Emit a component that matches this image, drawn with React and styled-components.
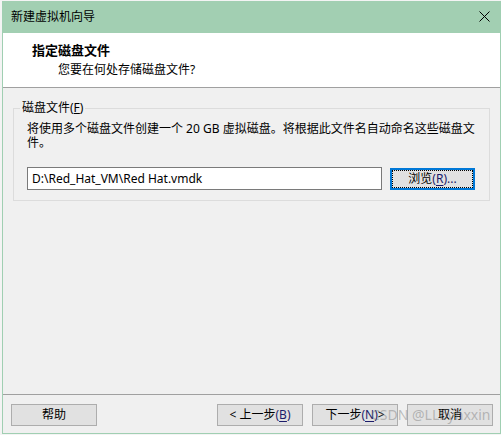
import React from "react";
import styled, { createGlobalStyle } from "styled-components";

const GlobalStyle = createGlobalStyle`
  html, body {
    margin: 0;
    padding: 0;
    background: #f4f4f4;
  }
  body {
    font-family: "Noto Sans", "Noto Sans CJK SC", sans-serif;
    font-size: 12px;
    color: #000;
  }
`;

const Window = styled.div`
  position: relative;
  box-sizing: border-box;
  width: 499px;
  height: 433px;
  margin: 1px 0 0 2px;
  border: 1px solid #a0cfb2;
  border-top: none;
  display: flex;
  flex-direction: column;
  background: #f0f0f0;
`;

const TitleBar = styled.div`
  height: 32px;
  flex: none;
  background: #a2cfb2;
  display: flex;
  align-items: center;
  justify-content: space-between;
  padding: 0 10px 0 8px;
  font-size: 12px;
  line-height: 16px;
`;

const Close = styled.svg`
  width: 11px;
  height: 11px;
  margin-top: -1px;
`;

const Header = styled.div`
  height: 55px;
  flex: none;
  background: #fff;
  border-bottom: 1px solid #a0a0a0;
  padding: 9px 0 0 29px;
  box-sizing: border-box;
`;

const HeaderTitle = styled.div`
  font-weight: bold;
  font-size: 13px;
  line-height: 17px;
`;

const HeaderSub = styled.div`
  margin: 2px 0 0 26px;
  line-height: 17px;
`;

const Body = styled.div`
  flex: 1;
  padding: 12px 10px 0 10px;
`;

const Group = styled.fieldset`
  margin: 0;
  border: 1px solid #dcdcdc;
  padding: 0 12px 10px 13px;
`;

const Legend = styled.legend`
  margin-left: -7px;
  padding: 0 2px;
  line-height: 16px;
`;

const Desc = styled.p`
  margin: 6px 0 0;
  line-height: 14px;
`;

const Row = styled.div`
  display: flex;
  align-items: center;
  gap: 8px;
  margin-top: 17px;
`;

const PathInput = styled.div`
  box-sizing: border-box;
  width: 355px;
  height: 23px;
  border: 1px solid #7a7a7a;
  background: #fff;
  padding: 0 4px;
  display: flex;
  align-items: center;
  line-height: 16px;
`;

const Button = styled.div`
  box-sizing: border-box;
  width: ${(p) => p.$w || 86}px;
  height: 22px;
  background: #e1e1e1;
  border: ${(p) => (p.$focus ? "2px solid #0078d7" : "1px solid #adadad")};
  outline: ${(p) => (p.$focus ? "1px dotted #000" : "none")};
  outline-offset: -3px;
  display: flex;
  align-items: center;
  justify-content: center;
  line-height: 16px;
  white-space: nowrap;
`;

const Key = styled.span`
  color: #1c1c6a;
  u {
    text-underline-offset: 2px;
  }
`;

const Footer = styled.div`
  height: 39px;
  flex: none;
  border-top: 1px solid #a0a0a0;
  display: flex;
  align-items: flex-start;
  padding: 9px 7px 0 8px;
  box-sizing: border-box;
  gap: 9px;
`;

const Spacer = styled.div`
  flex: 1;
`;

const Watermark = styled.div`
  position: absolute;
  left: 368px;
  top: 404px;
  font-family: "Noto Sans", sans-serif;
  font-size: 14px;
  line-height: 20px;
  color: rgba(120, 120, 120, 0.45);
  pointer-events: none;
  white-space: nowrap;
`;

export default function App() {
  return (
    <>
      <GlobalStyle />
      <Window>
        <TitleBar>
          <span>新建虚拟机向导</span>
          <Close viewBox="0 0 11 11">
            <path d="M0.5 0.5 L10.5 10.5 M10.5 0.5 L0.5 10.5" stroke="#000" strokeWidth="1" />
          </Close>
        </TitleBar>
        <Header>
          <HeaderTitle>指定磁盘文件</HeaderTitle>
          <HeaderSub>您要在何处存储磁盘文件?</HeaderSub>
        </Header>
        <Body>
          <Group>
            <Legend>
              磁盘文件(<u>F</u>)
            </Legend>
            <Desc>
              将使用多个磁盘文件创建一个 20 GB 虚拟磁盘。将根据此文件名自动命名这些磁盘文
              <br />
              件。
            </Desc>
            <Row>
              <PathInput>D:\Red_Hat_VM\Red Hat.vmdk</PathInput>
              <Button $w={85} $focus>
                浏览<Key>(<u>R</u>)...</Key>
              </Button>
            </Row>
          </Group>
        </Body>
        <Footer>
          <Button>帮助</Button>
          <Spacer />
          <Button>
            &lt; 上一步<Key>(<u>B</u>)</Key>
          </Button>
          <Button>
            下一步<Key>(<u>N</u>)</Key> &gt;
          </Button>
          <Button>取消</Button>
        </Footer>
        <Watermark>CSDN @LLbyhxxin</Watermark>
      </Window>
    </>
  );
}
